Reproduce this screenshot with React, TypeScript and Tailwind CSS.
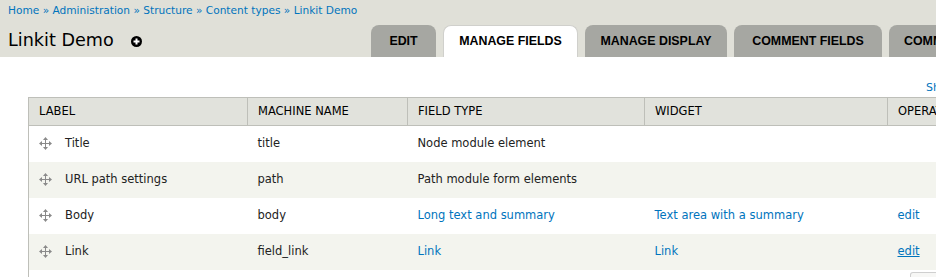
import React from 'react';

const font = { fontFamily: '"DejaVu Sans", "Liberation Sans", sans-serif' };
const tabFont = { fontFamily: '"Liberation Sans", Arial, sans-serif' };

type Row = {
  label: string;
  machine: string;
  type: string;
  typeLink?: boolean;
  widget?: string;
  edit?: 'plain' | 'hover';
};

const rows: Row[] = [
  { label: 'Title', machine: 'title', type: 'Node module element' },
  { label: 'URL path settings', machine: 'path', type: 'Path module form elements' },
  { label: 'Body', machine: 'body', type: 'Long text and summary', typeLink: true, widget: 'Text area with a summary', edit: 'plain' },
  { label: 'Link', machine: 'field_link', type: 'Link', typeLink: true, widget: 'Link', edit: 'hover' },
];

const tabs = [
  { label: 'EDIT', w: 'w-[65px]' },
  { label: 'MANAGE FIELDS', w: 'w-[135px]', active: true },
  { label: 'MANAGE DISPLAY', w: 'w-[142px]' },
  { label: 'COMMENT FIELDS', w: 'w-[148px]' },
  { label: 'COMMENT DISPLAY', w: 'w-[150px]' },
];

function DragHandle() {
  return (
    <svg width="13" height="13" viewBox="0 0 13 13" className="shrink-0">
      <g fill="#8a8a8a">
        <rect x="6" y="2" width="1" height="9" />
        <rect x="2" y="6" width="9" height="1" />
        <path d="M6.5 0 L9 3 L4 3 Z" />
        <path d="M6.5 13 L9 10 L4 10 Z" />
        <path d="M0 6.5 L3 4 L3 9 Z" />
        <path d="M13 6.5 L10 4 L10 9 Z" />
      </g>
    </svg>
  );
}

function PlusIcon() {
  return (
    <svg width="11" height="11" viewBox="0 0 11 11">
      <circle cx="5.5" cy="5.5" r="5.5" fill="#000" />
      <rect x="4.5" y="2.5" width="2" height="6" fill="#fff" />
      <rect x="2.5" y="4.5" width="6" height="2" fill="#fff" />
    </svg>
  );
}

export default function App() {
  return (
    <div className="w-[936px] h-[277px] overflow-hidden bg-white text-[#222]" style={font}>
      {/* page header */}
      <div className="bg-[#e0e0d8] h-[57px] w-[1100px]">
        <div className="pl-2 pt-[3px] text-[10.6px] leading-[14px] text-[#0074bd] whitespace-nowrap">
          <span>Home</span> » <span>Administration</span> » <span>Structure</span> » <span>Content types</span> » <span>Linkit Demo</span>
        </div>
        <div className="flex items-end mt-[8px]">
          <div className="flex items-center pl-2 w-[371px] shrink-0 h-[32px] self-start -mt-[1px]">
            <h1 className="text-[17.6px] leading-[24px] font-normal text-black">Linkit Demo</h1>
            <span className="ml-[17px] mt-[2px]"><PlusIcon /></span>
          </div>
          <div className="flex gap-[7px] whitespace-nowrap" style={tabFont}>
            {tabs.map((t) => (
              <div
                key={t.label}
                className={`${t.w} shrink-0 h-[32px] rounded-t-[8px] flex items-center justify-center text-[12.4px] font-bold ${
                  t.active ? 'bg-white text-black border border-b-0 border-[#d0d0cc]' : 'bg-[#a6a7a2] text-black'
                }`}
              >
                {t.label}
              </div>
            ))}
          </div>
        </div>
      </div>

      {/* body */}
      <div className="pl-[28px] w-[1100px]">
        <div className="h-[40px] pl-[898px] pt-[24px] text-[11px] leading-[14px] text-[#0074bd] whitespace-nowrap">
          Show row weights
        </div>
        <table className="border-collapse text-[11.5px] table-fixed w-[1000px]">
          <colgroup>
            <col className="w-[219px]" />
            <col className="w-[160px]" />
            <col className="w-[237px]" />
            <col className="w-[243px]" />
            <col className="w-[141px]" />
          </colgroup>
          <thead>
            <tr className="bg-[#e1e2dc] h-[28px] text-left">
              {['LABEL', 'MACHINE NAME', 'FIELD TYPE', 'WIDGET', 'OPERATIONS'].map((h) => (
                <th key={h} className="border border-[#bebfb9] font-normal px-[10px] py-0 text-[11.5px] text-black">
                  {h}
                </th>
              ))}
            </tr>
          </thead>
          <tbody>
            {rows.map((r, i) => (
              <tr key={r.label} className={`h-[36px] ${i % 2 === 1 ? 'bg-[#f3f4ee]' : 'bg-white'}`}>
                <td className="border-l border-[#bebfb9] pl-[10px]">
                  <div className="flex items-center gap-[13px]">
                    <DragHandle />
                    <span>{r.label}</span>
                  </div>
                </td>
                <td className="px-[10px]">{r.machine}</td>
                <td className={`px-[10px] ${r.typeLink ? 'text-[#0074bd]' : ''}`}>{r.type}</td>
                <td className="px-[10px] text-[#0074bd]">{r.widget ?? ''}</td>
                <td className="px-[10px] text-[#0074bd]">
                  {r.edit && <span className={r.edit === 'hover' ? 'underline' : ''}>edit</span>}
                </td>
              </tr>
            ))}
            <tr className="h-[20px]">
              <td className="border-l border-[#bebfb9]" />
              <td />
              <td />
              <td />
              <td className="align-top pl-[22px] pt-[2px]">
                <div className="h-[10px] w-[40px] border border-b-0 border-[#cfcfcf] rounded-t-[3px] bg-[#f7f7f5]" />
              </td>
            </tr>
          </tbody>
        </table>
      </div>
    </div>
  );
}
